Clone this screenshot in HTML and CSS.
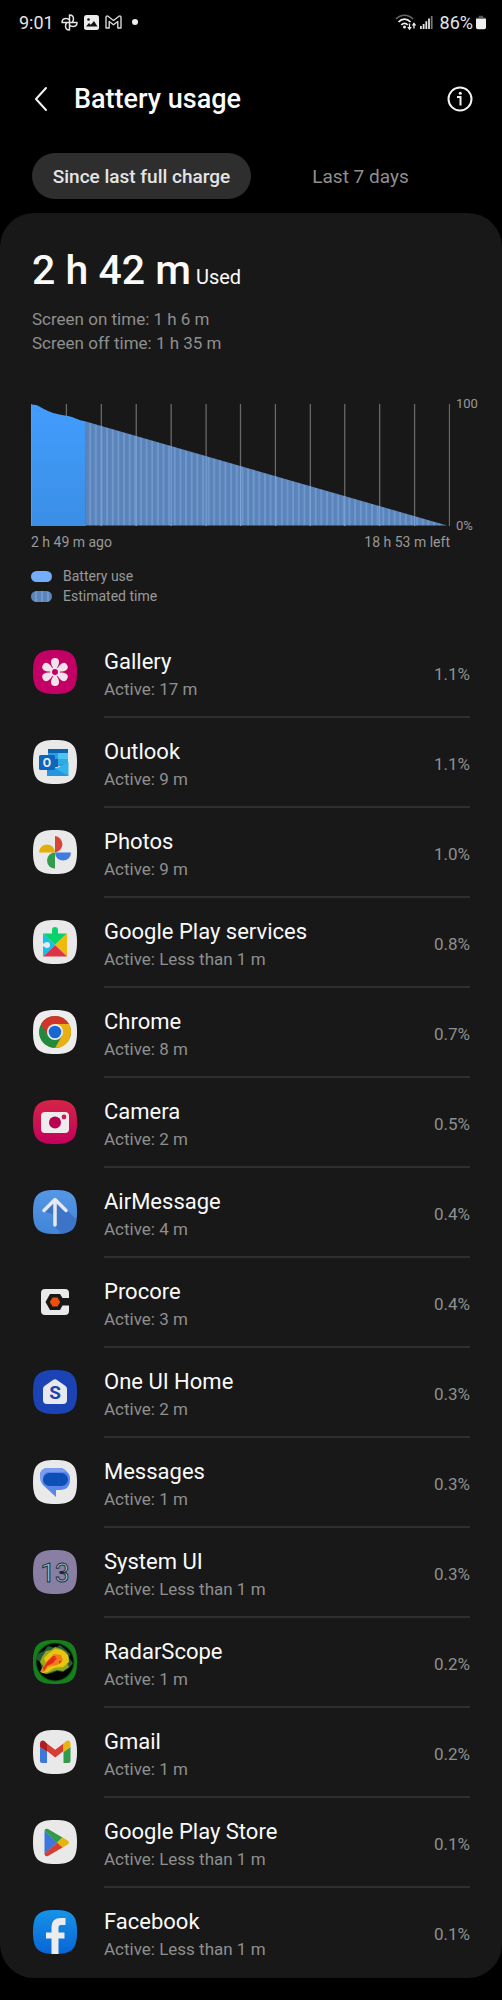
FILE: index.html
```html
<!DOCTYPE html>
<html lang="en">
  <head>
    <meta charset="UTF-8" />
    <meta name="viewport" content="width=device-width, initial-scale=1.0" />
    <title>Battery usage</title>
    <link rel="stylesheet" href="styles.css">
  </head>
  <body>
    <svg class="defs" width="0" height="0" aria-hidden="true">
      <defs>
        <path id="squircle" d="M0 22C0 5 5 0 22 0s22 5 22 22-5 22-22 22S0 39 0 22z" />
        <clipPath id="squircleClip"><use href="#squircle" /></clipPath>
        <linearGradient id="useFill" x1="0" y1="0" x2="0" y2="1">
          <stop offset="0" stop-color="#429dff" />
          <stop offset="1" stop-color="#3b8ee4" />
        </linearGradient>
        <pattern id="stripes" width="5.65" height="122" patternUnits="userSpaceOnUse">
          <rect width="5.65" height="122" fill="#5b84bb" />
          <rect x="2" width="1.7" height="122" fill="#7199ce" />
        </pattern>
        <linearGradient id="cameraFill" x1="0" y1="0" x2="0" y2="1">
          <stop offset="0" stop-color="#d42447" />
          <stop offset="1" stop-color="#c4005b" />
        </linearGradient>
        <linearGradient id="facebookFill" x1="0" y1="0" x2="0" y2="1">
          <stop offset="0" stop-color="#1793e8" />
          <stop offset="1" stop-color="#0865d6" />
        </linearGradient>
        <linearGradient id="airFill" x1="0" y1="0" x2="0" y2="1">
          <stop offset="0" stop-color="#5597e4" />
          <stop offset="1" stop-color="#4085d8" />
        </linearGradient>
      </defs>
    </svg>

    <div class="status-bar">
      <div class="status-group">
        <span class="clock">9:01</span>
        <svg width="17" height="17" viewBox="0 0 17 17" fill="none" stroke="#e4e4e4" stroke-width="1.5" stroke-linejoin="round">
          <path d="M8.500 8.500V1C11.500 1 12.500 3 12.500 5c0 1.500-.7 2.700-1.500 3.500M8.500 8.500H16c0 3-2 4-4 4-1.500 0-2.700-.7-3.500-1.500M8.500 8.500V16c-3 0-4-2-4-4 0-1.500.7-2.700 1.500-3.500M8.500 8.500H1c0-3 2-4 4-4 1.500 0 2.700.7 3.500 1.500" />
        </svg>
        <svg width="15" height="15" viewBox="0 0 15 15">
          <rect width="15" height="15" rx="2.500" fill="#ececec" />
          <circle cx="4.500" cy="4.500" r="1.300" fill="#111" />
          <path d="M2 11.500l3-3.500 1.800 1.700L10 6l3.500 5.500z" fill="#111" />
        </svg>
        <svg width="17" height="14" viewBox="0 0 17 14" fill="none" stroke="#d8d8d8" stroke-width="1.400" stroke-linejoin="round">
          <path d="M1 13V2.200C1 1 2.200.7 3 1.300L8.500 5.500 14 1.300c.8-.6 2-.3 2 .9V13h-3.200V6.500L8.500 9.800 4.200 6.500V13z" />
        </svg>
        <span class="status-dot"></span>
      </div>
      <div class="status-group status-right">
        <svg width="22" height="17" viewBox="0 0 22 17" fill="none" stroke="#eee" stroke-width="1.700">
          <path d="M1 5c5-5 12-5 17 0" stroke="#666" />
          <path d="M3.500 8c3.500-3.800 8.500-3.800 12 0M6.300 11c2-2.200 4.600-2.200 6.500 0" />
          <circle cx="9.500" cy="13" r="1.500" fill="#eee" stroke="none" />
          <path d="M14.500 9.500v5M19 14.500v-4" stroke-width="1.300" />
          <path d="M12.200 13h4.600l-2.300 3.300zM16.700 11.500h4.600L19 8.200z" fill="#eee" stroke="none" />
        </svg>
        <svg width="13" height="14" viewBox="0 0 13 14" fill="#e4e4e4">
          <path d="M0 11h1.800v3H0zM2.700 9h1.800v5H2.700zM5.400 6.300h1.800V14H5.400zM8.100 3.600h1.800V14H8.100z" />
          <path d="M10.800 1h1.800v13h-1.800z" fill="#777" />
        </svg>
        <span class="charge">86%</span>
        <svg width="10" height="15" viewBox="0 0 11 15">
          <path d="M3 0h5v2h1.500Q11 2 11 4H0Q0 2 1.500 2H3z" fill="#555" />
          <path d="M0 3.500h11V13q0 2-2 2H2q-2 0-2-2z" fill="#f0f0f0" />
        </svg>
      </div>
    </div>

    <header class="top-bar">
      <button class="icon-button" type="button" aria-label="Back">
        <svg width="14" height="26" viewBox="0 0 14 26" fill="none" stroke="#f2f2f2" stroke-width="2" stroke-linecap="round" stroke-linejoin="round">
          <path d="M12 2L2 13l10 11" />
        </svg>
      </button>
      <h1>Battery usage</h1>
      <button class="icon-button" type="button" aria-label="Information">
        <svg width="26" height="26" viewBox="0 0 26 26" fill="none" stroke="#f2f2f2" stroke-width="2">
          <circle cx="13" cy="13" r="11.500" />
          <path d="M10 11h3.500v8.500" />
          <circle cx="13.300" cy="7.300" r="1.500" fill="#f2f2f2" stroke="none" />
        </svg>
      </button>
    </header>

    <nav class="tabs">
      <button class="tab active" type="button">Since last full charge</button>
      <button class="tab" type="button">Last 7 days</button>
    </nav>

    <main class="card">
      <section class="summary">
        <p class="total"><strong>2 h 42 m</strong> <span>Used</span></p>
        <p class="screen-time">Screen on time: 1 h 6 m</p>
        <p class="screen-time">Screen off time: 1 h 35 m</p>
      </section>

      <section class="chart">
        <div class="chart-row">
          <svg class="plot" viewBox="0 0 420 122" preserveAspectRatio="none">
            <path d="M.5 0v122M35.500 0v122M70.500 0v122M105.500 0v122M140.500 0v122M175.500 0v122M210 0v122M245 0v122M280 0v122M314.500 0v122M349.500 0v122M384.500 0v122M419.500 0v122" stroke="#696969" stroke-width="1.300" />
            <path d="M55 17.500L417 121.500H55z" fill="url(#stripes)" />
            <path d="M0 0.500C8 .5 10 4 17 7s14 4 20 5 9 4 18 5.500v104.500H0z" fill="url(#useFill)" />
            <path d="M70.500 22v100M105.500 32v90M140.500 42v80M175.500 52v70M210 62v60M245 72v50M280 82v40M314.500 92v30M349.500 102v20M384.500 112v10" stroke="#7da3d6" />
            <path d="M.5 2v120" stroke="#5e9cdf" />
          </svg>
          <div class="scale">
            <span>100</span>
            <span>0%</span>
          </div>
        </div>
        <div class="range">
          <span>2 h 49 m ago</span>
          <span>18 h 53 m left</span>
        </div>
        <ul class="legend">
          <li><span class="swatch"></span>Battery use</li>
          <li><span class="swatch swatch-estimated"></span>Estimated time</li>
        </ul>
      </section>

      <ul class="app-list">
        <li class="app">
          <svg class="app-icon" viewBox="0 0 44 44">
            <use href="#squircle" fill="#c20065" />
            <g fill="#f0e4ea">
              <path id="petal" d="M22 20c-2-2-4-5-4-8a4 4 0 0 1 8 0c0 3-2 6-4 8z" />
              <use href="#petal" transform="rotate(60 22 22)" />
              <use href="#petal" transform="rotate(120 22 22)" />
              <use href="#petal" transform="rotate(180 22 22)" />
              <use href="#petal" transform="rotate(240 22 22)" />
              <use href="#petal" transform="rotate(300 22 22)" />
              <circle cx="22" cy="22" r="5" />
            </g>
            <circle cx="22" cy="22" r="3" fill="#c20065" />
          </svg>
          <div class="app-body">
            <div class="app-text">
              <h2>Gallery</h2>
              <p>Active: 17 m</p>
            </div>
            <span class="percent">1.1%</span>
          </div>
        </li>
        <li class="app">
          <svg class="app-icon" viewBox="0 0 44 44">
            <use href="#squircle" fill="#e9e9e9" />
            <path d="M15 9h20v17H15z" fill="#2b9de0" />
            <path d="M15 9h20v4H15z" fill="#0c62ad" />
            <path d="M25 13h10v6H25z" fill="#4cc5f0" />
            <path d="M25 19h10v5H25z" fill="#2fa9e4" />
            <path d="M15 19h10v8H15z" fill="#1066b5" />
            <path d="M14 24l10 4 11.500-6v13q0 1-1 1H15q-1 0-1-1z" fill="#31b2e8" />
            <path d="M14 24l22 12H15q-1 0-1-1z" fill="#2795dc" />
            <rect x="6" y="15" width="16" height="15" rx="1.500" fill="#0d66bd" />
            <text class="outlook-letter" x="14" y="27" text-anchor="middle">O</text>
          </svg>
          <div class="app-body">
            <div class="app-text">
              <h2>Outlook</h2>
              <p>Active: 9 m</p>
            </div>
            <span class="percent">1.1%</span>
          </div>
        </li>
        <li class="app">
          <svg class="app-icon" viewBox="0 0 44 44">
            <use href="#squircle" fill="#e9e9e9" />
            <path d="M22 6a8.300 8.300 0 0 1 0 16.500z" fill="#d84437" />
            <path d="M38 22.500a8 8 0 0 1-16 0z" fill="#3f7be0" />
            <path d="M22 38.500a8 8 0 0 1 0-16z" fill="#349b4e" />
            <path d="M6 22.500a8 8 0 0 1 16 0z" fill="#e2ae0b" />
          </svg>
          <div class="app-body">
            <div class="app-text">
              <h2>Photos</h2>
              <p>Active: 9 m</p>
            </div>
            <span class="percent">1.0%</span>
          </div>
        </li>
        <li class="app">
          <svg class="app-icon" viewBox="0 0 44 44">
            <use href="#squircle" fill="#e9e9e9" />
            <path d="M10 13.500h9V10a3 3 0 1 1 6 0v3.500h9L22 25z" fill="#08d36a" />
            <path d="M34 13.500v23L22 25z" fill="#f0b90d" />
            <path d="M10 36.500h24L22 25z" fill="#dd3347" />
            <path d="M10 13.500v23L22 25z" fill="#16bfe8" />
            <circle cx="14" cy="25" r="3" fill="#e9e9e9" />
            <path d="M10 23.500h4v3h-4z" fill="#e9e9e9" />
          </svg>
          <div class="app-body">
            <div class="app-text">
              <h2>Google Play services</h2>
              <p>Active: Less than 1 m</p>
            </div>
            <span class="percent">0.8%</span>
          </div>
        </li>
        <li class="app">
          <svg class="app-icon" viewBox="0 0 44 44">
            <use href="#squircle" fill="#ededed" />
            <circle cx="22" cy="22" r="16" fill="#23893c" />
            <path d="M8.140 14A16 16 0 0 1 35.860 14H22L15.070 26z" fill="#cf3529" />
            <path d="M35.860 14A16 16 0 0 1 22 38L28.930 26 22 14z" fill="#eab013" />
            <circle cx="22" cy="22" r="8" fill="#eee" />
            <circle cx="22" cy="22" r="6.300" fill="#1967d2" />
          </svg>
          <div class="app-body">
            <div class="app-text">
              <h2>Chrome</h2>
              <p>Active: 8 m</p>
            </div>
            <span class="percent">0.7%</span>
          </div>
        </li>
        <li class="app">
          <svg class="app-icon" viewBox="0 0 44 44">
            <use href="#squircle" fill="url(#cameraFill)" />
            <rect x="8" y="12" width="28" height="21" rx="4" fill="#ececec" />
            <circle cx="22" cy="22.500" r="6" fill="#b80050" />
            <circle cx="31" cy="17" r="2.400" fill="#cc1c50" />
          </svg>
          <div class="app-body">
            <div class="app-text">
              <h2>Camera</h2>
              <p>Active: 2 m</p>
            </div>
            <span class="percent">0.5%</span>
          </div>
        </li>
        <li class="app">
          <svg class="app-icon" viewBox="0 0 44 44">
            <use href="#squircle" fill="url(#airFill)" />
            <path d="M22 9l13 12 12 12v14H32L22 37V25L10 21z" fill="#3d74c8" clip-path="url(#squircleClip)" />
            <path d="M22 35V10M11 20.500L22 9.500l11 11" fill="none" stroke="#e6eaf0" stroke-width="3.500" stroke-linecap="round" stroke-linejoin="round" />
          </svg>
          <div class="app-body">
            <div class="app-text">
              <h2>AirMessage</h2>
              <p>Active: 4 m</p>
            </div>
            <span class="percent">0.4%</span>
          </div>
        </li>
        <li class="app">
          <svg class="app-icon" viewBox="0 0 44 44">
            <path d="M12 9h20q4 0 4 4v5h-6.500L27 14H17l-4.500 8L17 30h10l2.500-4.500H36V31q0 4-4 4H12q-4 0-4-4V13q0-4 4-4z" fill="#e9e9eb" />
            <path d="M19.500 17.500h5l2.700 4.500-2.700 4.500h-5L16.800 22z" fill="#ee4f0b" />
          </svg>
          <div class="app-body">
            <div class="app-text">
              <h2>Procore</h2>
              <p>Active: 3 m</p>
            </div>
            <span class="percent">0.4%</span>
          </div>
        </li>
        <li class="app">
          <svg class="app-icon" viewBox="0 0 44 44">
            <use href="#squircle" fill="#1c43b3" />
            <path d="M20 10q2-1.500 4 0l8.500 6q1.500 1 1.500 3v11q0 4-4 4H14q-4 0-4-4V19q0-2 1.500-3z" fill="#e8e9ee" />
            <text class="home-letter" x="22" y="29" text-anchor="middle">S</text>
          </svg>
          <div class="app-body">
            <div class="app-text">
              <h2>One UI Home</h2>
              <p>Active: 2 m</p>
            </div>
            <span class="percent">0.3%</span>
          </div>
        </li>
        <li class="app">
          <svg class="app-icon" viewBox="0 0 44 44">
            <use href="#squircle" fill="#e9e9e9" />
            <path d="M16 8h10q6 0 8 5H11q1-5 5-5z" fill="#7c9dee" />
            <path d="M15 8h11q5 0 8 4 3 2 3 7 0 11-10 11h-4v7L10 25q-3-4-3-9 0-8 8-8z" fill="#5a85ea" />
            <path d="M15 8h11q5 0 7 4H15q-6 0-5.500 13Q7 21 7 16q0-8 8-8z" fill="#7c9dee" />
            <rect x="10" y="13" width="25" height="13" rx="6.500" fill="#0b50b5" />
          </svg>
          <div class="app-body">
            <div class="app-text">
              <h2>Messages</h2>
              <p>Active: 1 m</p>
            </div>
            <span class="percent">0.3%</span>
          </div>
        </li>
        <li class="app">
          <svg class="app-icon" viewBox="0 0 44 44">
            <use href="#squircle" fill="#887fa3" />
            <text class="version-number" x="22" y="32" text-anchor="middle">13</text>
          </svg>
          <div class="app-body">
            <div class="app-text">
              <h2>System UI</h2>
              <p>Active: Less than 1 m</p>
            </div>
            <span class="percent">0.3%</span>
          </div>
        </li>
        <li class="app">
          <svg class="app-icon" viewBox="0 0 44 44">
            <use href="#squircle" fill="#16801c" />
            <circle cx="22" cy="22" r="19.500" fill="#0f5a16" />
            <circle cx="22" cy="22" r="18.500" fill="#030504" />
            <path d="M5 14l6-3 4-5 7 2 5-3 6 5 4 4-1 4 4 5-3 4-4 3-3 2-6-1-5 2-5 1-5-5-2-7-4-3z" fill="#24593a" />
            <path d="M9 17l4-6 5-1 4-3 6 2 5 3 3 6-2 5 2 4-6 4-6-1-6 2-5 2-6-2 3-6-3-4z" fill="#96a817" />
            <path d="M11 18l5-5 6-4 7 1 6 5 1 7-6 5-9 1-6 4-6 1 1-5 3-4z" fill="#e8c414" />
            <path d="M13 22l8-8 7 1 2 5-6 5-9 2-4 5-3-1 3-5z" fill="#f07d16" />
            <path d="M14 22l5-5 5 1-4 5-6 3-3 5-1-3 3-4z" fill="#e22b16" />
            <path d="M19 16h4l-2 2zM26 21h3l-3 3z" fill="#e22b16" />
          </svg>
          <div class="app-body">
            <div class="app-text">
              <h2>RadarScope</h2>
              <p>Active: 1 m</p>
            </div>
            <span class="percent">0.2%</span>
          </div>
        </li>
        <li class="app">
          <svg class="app-icon" viewBox="0 0 44 44">
            <use href="#squircle" fill="#e9e9e9" />
            <path d="M7 17l7 5v11H9q-2 0-2-2z" fill="#3d78dc" />
            <path d="M30.500 22l7-5v14q0 2-2 2h-5z" fill="#319a4b" />
            <path d="M14 13.500l8.200 6.300 8.300-6.300V21l-8.300 6.500L14 21z" fill="#d63e32" />
            <path d="M7 14c0-4 4-4.500 6-1.300l1 .8V22l-7-5z" fill="#ae1d20" />
            <path d="M37.500 14c0-4-4-4.500-6-1.300l-1 .8V22l7-5z" fill="#e7b30c" />
          </svg>
          <div class="app-body">
            <div class="app-text">
              <h2>Gmail</h2>
              <p>Active: 1 m</p>
            </div>
            <span class="percent">0.2%</span>
          </div>
        </li>
        <li class="app">
          <svg class="app-icon" viewBox="0 0 44 44">
            <use href="#squircle" fill="#e9e9e9" />
            <path d="M11.500 10.500v24L24 22.500z" fill="#3d76dc" />
            <path d="M11.500 10.500Q12 8 15 9l14.500 8.500L24 23z" fill="#319a4b" />
            <path d="M29.500 17.300l5 3.200q3 2 0 4l-5 3.200L24 22.500z" fill="#e7b30c" />
            <path d="M11.500 34Q12 37 15 36l14.500-8.500-5.500-5z" fill="#d63e32" />
          </svg>
          <div class="app-body">
            <div class="app-text">
              <h2>Google Play Store</h2>
              <p>Active: Less than 1 m</p>
            </div>
            <span class="percent">0.1%</span>
          </div>
        </li>
        <li class="app">
          <svg class="app-icon" viewBox="0 0 44 44">
            <use href="#squircle" fill="url(#facebookFill)" />
            <g fill="none" stroke="#ececec" clip-path="url(#squircleClip)">
              <path d="M22 46V17q0-5.500 6-5.500h4.500" stroke-width="7" />
              <path d="M13 25.500h18.500" stroke-width="6" />
            </g>
          </svg>
          <div class="app-body">
            <div class="app-text">
              <h2>Facebook</h2>
              <p>Active: Less than 1 m</p>
            </div>
            <span class="percent">0.1%</span>
          </div>
        </li>
      </ul>
    </main>
  </body>
</html>
```
FILE: styles.css
```css
* {
  box-sizing: border-box;
}
body {
  margin: 0;
  background-color: #000;
  color: #fafafa;
  font-family: Roboto, sans-serif;
}
h1,
h2,
p,
ul {
  margin: 0;
  padding: 0;
}
ul {
  list-style: none;
}
button {
  border: 0;
  padding: 0;
  background: none;
  color: inherit;
  font-family: inherit;
  cursor: pointer;
}
svg {
  display: block;
  flex-shrink: 0;
}
.defs {
  position: absolute;
}

/* status bar */
.status-bar {
  display: flex;
  align-items: center;
  justify-content: space-between;
  height: 44px;
  padding: 0 16px 0 19px;
  color: #e4e4e4;
  font-size: 18px;
}
.status-group {
  display: flex;
  align-items: center;
  gap: 6px;
}
.clock {
  margin-right: 1px;
}
.status-dot {
  width: 6px;
  height: 6px;
  margin-left: 4px;
  border-radius: 50%;
  background-color: #eee;
}
.status-right {
  gap: 3px;
}
.charge {
  margin-left: 4px;
}

/* header */
.top-bar {
  display: flex;
  align-items: center;
  height: 109px;
  padding: 0 29px 0 34px;
}
.top-bar h1 {
  flex: 1;
  margin-left: 26px;
  font-size: 27px;
  font-weight: 500;
  line-height: 32px;
}
.tabs {
  display: flex;
  padding: 0 32px;
}
.tab {
  flex: 1;
  height: 46px;
  border-radius: 23px;
  color: #8f8f8f;
  font-size: 19px;
}
.tab.active {
  background-color: #2e2e2e;
  color: #e4e4e4;
  font-weight: 500;
}

/* card */
.card {
  margin-top: 14px;
  padding-top: 32px;
  border-radius: 34px;
  background-color: #181818;
}
.summary {
  padding: 0 32px;
}
.total {
  margin-bottom: 5px;
  font-size: 20px;
  line-height: 50px;
}
.total strong {
  font-size: 41px;
  font-weight: 500;
}
.screen-time {
  color: #8f8f8f;
  font-size: 17px;
  line-height: 24px;
}

/* chart */
.chart {
  margin-top: 49px;
  padding: 0 20px 0 31px;
  color: #999;
}
.chart-row {
  display: flex;
  gap: 6px;
}
.plot {
  flex: 1;
  min-width: 0;
  height: 122px;
}
.scale {
  display: flex;
  flex-direction: column;
  justify-content: space-between;
  width: 26px;
  margin: -8px 0;
  font-size: 13px;
  line-height: 16px;
}
.range {
  display: flex;
  justify-content: space-between;
  margin: 6px 32px 0 0;
  font-size: 14px;
  line-height: 20px;
}
.legend {
  margin-top: 14px;
  font-size: 14px;
  line-height: 20px;
}
.legend li {
  display: flex;
  align-items: center;
  gap: 11px;
}
.swatch {
  width: 21px;
  height: 11px;
  border-radius: 6px;
  background-color: #74adfa;
}
.swatch-estimated {
  background: repeating-linear-gradient(90deg, #5b84bb 0 4px, #7199ce 4px 6px);
}

/* app list */
.app-list {
  margin-top: 22px;
}
.app {
  display: flex;
  height: 90px;
  padding: 0 32px 0 33px;
}
.app-icon {
  width: 44px;
  height: 44px;
  margin: 22px 27px 0 0;
}
.app-body {
  display: flex;
  flex: 1;
  align-items: flex-start;
  justify-content: space-between;
  border-bottom: 2px solid #2f2f2f;
}
.app:last-child .app-body {
  border-bottom: 0;
}
.app-text {
  padding-top: 20px;
}
.app-text h2 {
  font-size: 22px;
  font-weight: 400;
  line-height: 28px;
}
.app-text p {
  color: #8f8f8f;
  font-size: 17px;
  line-height: 26px;
}
.percent {
  padding-top: 34px;
  color: #8f8f8f;
  font-size: 17px;
  line-height: 24px;
}
.outlook-letter {
  fill: #eee;
  font-size: 12px;
  font-weight: 700;
}
.home-letter {
  fill: #1c43b3;
  font-size: 19px;
  font-weight: 700;
}
.version-number {
  fill: #a9c9d6;
  stroke: #17303f;
  stroke-width: 1px;
  font-size: 26px;
  font-weight: 400;
}
```
